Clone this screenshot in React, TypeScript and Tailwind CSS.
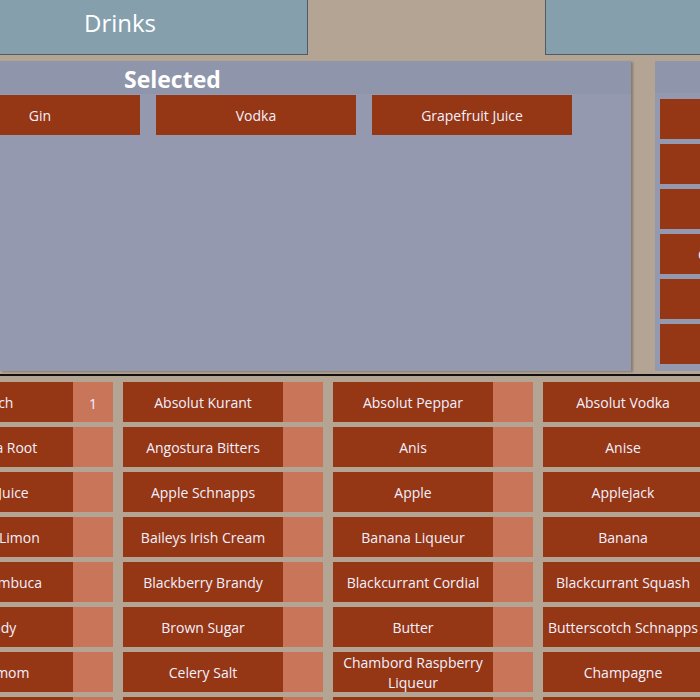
import React from 'react';

const selected = ['Gin', 'Vodka', 'Grapefruit Juice'];

const rows: [string, string][][] = [
  [['Punch', '1'], ['Absolut Kurant', ''], ['Absolut Peppar', ''], ['Absolut Vodka', '']],
  [['Angelica Root', ''], ['Angostura Bitters', ''], ['Anis', ''], ['Anise', '']],
  [['Apple Juice', ''], ['Apple Schnapps', ''], ['Apple', ''], ['Applejack', '']],
  [['Bacardi Limon', ''], ['Baileys Irish Cream', ''], ['Banana Liqueur', ''], ['Banana', '']],
  [['Black Sambuca', ''], ['Blackberry Brandy', ''], ['Blackcurrant Cordial', ''], ['Blackcurrant Squash', '']],
  [['Brandy', ''], ['Brown Sugar', ''], ['Butter', ''], ['Butterscotch Schnapps', '']],
  [['Cardamom', ''], ['Celery Salt', ''], ['Chambord Raspberry Liqueur', ''], ['Champagne', '']],
  [['Cherry Brandy', ''], ['Chocolate', ''], ['Cider', ''], ['Cinnamon', '']],
];

// only the long label peeks in from the right edge
const categories = ['', '', '', 'Cocktail Extras', '', ''];

export default function App() {
  return (
    <div className="w-[700px] h-[700px] overflow-hidden bg-[#b3a494] text-[#f4f0ff] font-['Open_Sans',sans-serif]">
      {/* top tabs */}
      <div className="flex h-[55px]">
        <div className="w-[308px] shrink-0 bg-[#869fad] border-r border-b border-[#4f5b62] pl-[84px] pt-[5px] text-[24px] font-normal text-white">
          Drinks
        </div>
        <div className="w-[237px] shrink-0" />
        <div className="flex-1 bg-[#869fad] border-l border-b border-[#4f5b62]" />
      </div>

      {/* selected + categories */}
      <div className="flex mt-[6px] h-[310px]">
        <div className="w-[631px] shrink-0 bg-[#9499b0] shadow-[2px_1px_2px_rgba(0,0,0,0.25)] overflow-hidden">
          <div className="h-[33px] bg-[#8f95aa] pl-[124px] pt-[3px] flex items-center text-[23px] font-bold text-white">
            Selected
          </div>
          <div className="flex gap-4 ml-[-60px] mt-px">
            {selected.map(s => (
              <div key={s} className="w-[200px] h-[40px] shrink-0 bg-[#953614] flex items-center justify-center pt-px text-[14px]">
                {s}
              </div>
            ))}
          </div>
        </div>
        <div className="w-[24px] shrink-0" />
        <div className="flex-1 bg-[#9499b0] overflow-hidden">
          <div className="h-[32px] bg-[#8f95aa]" />
          <div className="flex flex-col gap-[5px] pl-[5px] mt-[6px]">
            {categories.map((c, i) => (
              <div key={i} className="w-[200px] h-[40px] shrink-0 bg-[#953614] flex items-center text-[14px] whitespace-nowrap">
                <span className="pl-[38px]">{c}</span>
              </div>
            ))}
          </div>
        </div>
      </div>

      {/* item grid */}
      <div className="mt-[3px] border-t-2 border-[#111]">
        <div className="flex flex-col gap-[5px] ml-[-87px] pt-[6px]">
          {rows.map((row, ri) => (
            <div key={ri} className="flex gap-[10px]">
              {row.map(([name, count]) => (
                <div key={name} className="flex w-[200px] h-[40px] shrink-0">
                  <div className="w-[160px] bg-[#953614] flex items-center justify-center text-center text-[14px] leading-5 px-1 pt-[2px]">
                    {name}
                  </div>
                  <div className="w-[40px] bg-[#c8755a] flex items-center justify-center text-[14px] pt-[2px]">
                    {count}
                  </div>
                </div>
              ))}
            </div>
          ))}
        </div>
      </div>
    </div>
  );
}
